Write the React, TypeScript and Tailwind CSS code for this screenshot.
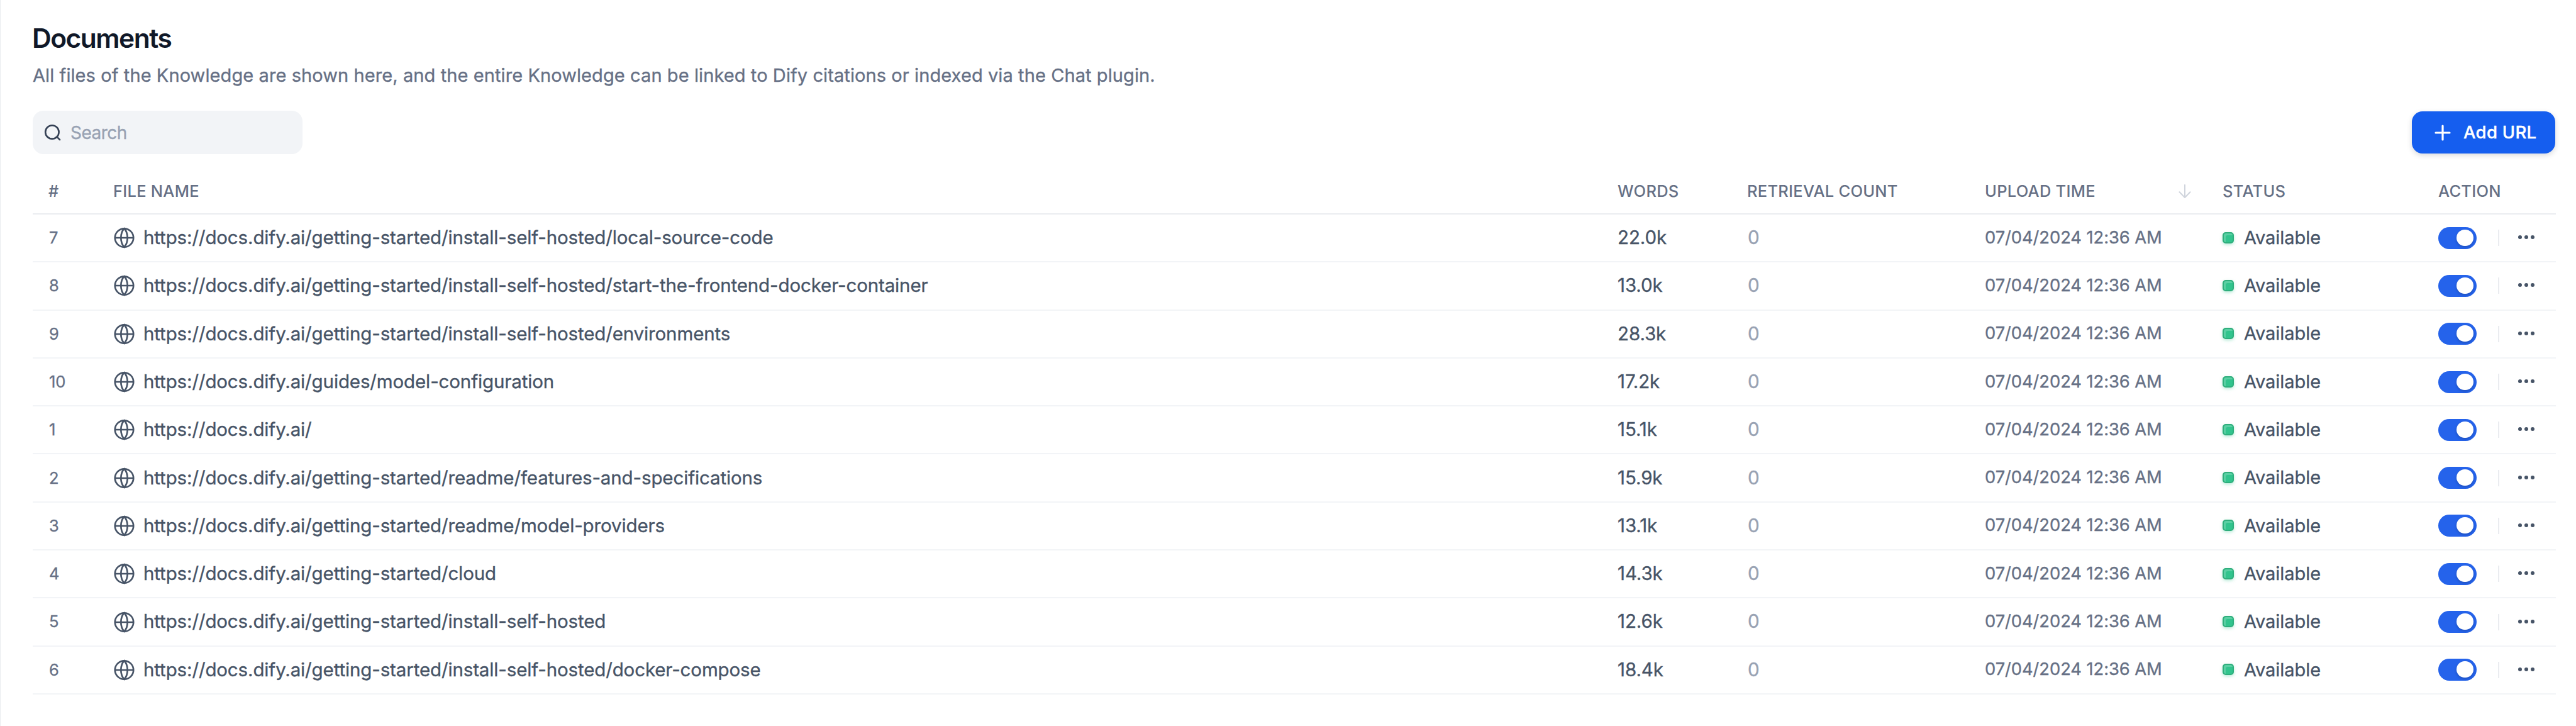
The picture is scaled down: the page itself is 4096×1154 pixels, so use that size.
const rows: [string, string, string][] = [
  ['7', 'https://docs.dify.ai/getting-started/install-self-hosted/local-source-code', '22.0k'],
  ['8', 'https://docs.dify.ai/getting-started/install-self-hosted/start-the-frontend-docker-container', '13.0k'],
  ['9', 'https://docs.dify.ai/getting-started/install-self-hosted/environments', '28.3k'],
  ['10', 'https://docs.dify.ai/guides/model-configuration', '17.2k'],
  ['1', 'https://docs.dify.ai/', '15.1k'],
  ['2', 'https://docs.dify.ai/getting-started/readme/features-and-specifications', '15.9k'],
  ['3', 'https://docs.dify.ai/getting-started/readme/model-providers', '13.1k'],
  ['4', 'https://docs.dify.ai/getting-started/cloud', '14.3k'],
  ['5', 'https://docs.dify.ai/getting-started/install-self-hosted', '12.6k'],
  ['6', 'https://docs.dify.ai/getting-started/install-self-hosted/docker-compose', '18.4k'],
]

const columns = 'grid grid-cols-[103px_2392px_206px_378px_378px_343px_1fr] pl-[25px] items-center'

function Globe() {
  return (
    <svg className="h-[34px] w-[34px] shrink-0" viewBox="0 0 34 34" fill="none" stroke="#475467" strokeWidth="2.7">
      <circle cx="17.5" cy="17" r="14.7" />
      <path d="M2.7 17h29.6M17.5 2.2c-3.5 4-5.2 9.2-5.2 14.8s1.7 10.8 5.2 14.8c3.5-4 5.2-9.2 5.2-14.8s-1.7-10.8-5.2-14.8z" />
    </svg>
  )
}

export default function App() {
  return (
    <div className="h-[1154px] w-[4096px] overflow-hidden border-l border-[#eaecf0] bg-white pl-[51px] pr-[32px] font-['Inter',sans-serif]">
      <h1 className="-ml-px mt-[36px] h-[50px] text-[42.5px] leading-[50px] font-semibold tracking-[-1.5px] text-[#101828]">
        Documents
      </h1>
      <p className="mt-[12px] h-[44px] text-[29px] leading-[44px] tracking-[0.09px] text-[#667085] [-webkit-text-stroke:0.35px]">
        All files of the Knowledge are shown here, and the entire Knowledge can be linked to Dify citations or indexed via the Chat plugin.
      </p>
      <div className="mt-[34px] mr-px flex h-[69px] items-center justify-between">
        <div className="flex h-[69px] w-[429px] items-center rounded-[17px] bg-[#f2f4f7] pl-[18px]">
          <svg className="h-[30px] w-[30px]" viewBox="0 0 30 30" fill="none" stroke="#344054" strokeWidth="2.6" strokeLinecap="round">
            <circle cx="12.9" cy="13.9" r="10.7" />
            <path d="M20.8 21.8l4.3 4.3" />
          </svg>
          <span className="ml-[12px] text-[28px] tracking-[-0.5px] text-[#98a2b3] [-webkit-text-stroke:0.35px]">Search</span>
        </div>
        <button className="flex h-[67px] w-[228px] items-center rounded-[17px] bg-[#155eef] pl-[36px] text-[27.5px] font-medium tracking-[0.3px] text-white shadow-[0_3px_8px_rgba(16,24,40,0.16)]">
          <svg className="h-[26px] w-[26px]" viewBox="0 0 26 26" fill="none" stroke="white" strokeWidth="3.2" strokeLinecap="round">
            <path d="M13 2v22M2 13h22" />
          </svg>
          <span className="ml-[20px] whitespace-nowrap [-webkit-text-stroke:0.35px]">Add URL</span>
        </button>
      </div>
      <div className={`${columns} mt-[24px] h-[72px] border-b-2 border-[#eaecf0] text-[25.5px] font-medium tracking-[0.25px] text-[#667085]`}>
        <span>#</span>
        <span>FILE NAME</span>
        <span>WORDS</span>
        <span>RETRIEVAL COUNT</span>
        <span className="flex items-center justify-between pr-[50px]">
          UPLOAD TIME
          <svg className="h-[22px] w-[20px]" viewBox="0 0 20 22" fill="none" stroke="#d0d5dd" strokeWidth="2" strokeLinecap="round" strokeLinejoin="round">
            <path d="M10 1v20M1.5 12.3l8.5 8.7 8.5-8.7" />
          </svg>
        </span>
        <span>STATUS</span>
        <span>ACTION</span>
      </div>
      {rows.map(([n, url, words]) => (
        <div key={n} className={`${columns} h-[76.3px] border-b-2 border-[#f2f4f7] text-[29.5px] text-[#475467] [-webkit-text-stroke:0.35px]`}>
          <span className="pl-px text-[25.5px] text-[#667085]">{n}</span>
          <span className="flex items-center gap-[14px]">
            <Globe />
            <span className="pb-[2px] tracking-[-0.13px]">{url}</span>
          </span>
          <span className="pb-[2px] tracking-[-0.1px]">{words}</span>
          <span className="pb-[2px] pl-px text-[#98a2b3]">0</span>
          <span className="text-[27.3px] tracking-[-0.05px] text-[#667085]">07/04/2024 12:36 AM</span>
          <span className="flex items-center pb-px">
            <span className="h-[18px] w-[18px] rounded-[5px] border-2 border-[#2fae7c] bg-[#31c48d] shadow-[0_2px_5px_rgba(49,196,141,0.35),inset_3px_3px_0_rgba(255,255,255,0.2)]" />
            <span className="ml-[16px] text-[29px] tracking-[-0.05px]">Available</span>
          </span>
          <span className="flex items-center">
            <span className="flex h-[35px] w-[61px] justify-end rounded-full bg-[#2563eb] pt-[4px] pr-[5px]">
              <span className="h-[26px] w-[27px] rounded-full bg-white shadow-[0_2px_4px_rgba(0,0,0,0.2)]" />
            </span>
            <span className="ml-[34px] h-[26px] w-[2px] bg-[#eaecf0]" />
            <svg className="mb-[2px] ml-[30px] h-[6px] w-[28px]" viewBox="0 0 28 6" fill="#475467">
              <circle cx="3" cy="3" r="3" />
              <circle cx="13" cy="3" r="3" />
              <circle cx="23" cy="3" r="3" />
            </svg>
          </span>
        </div>
      ))}
    </div>
  )
}
